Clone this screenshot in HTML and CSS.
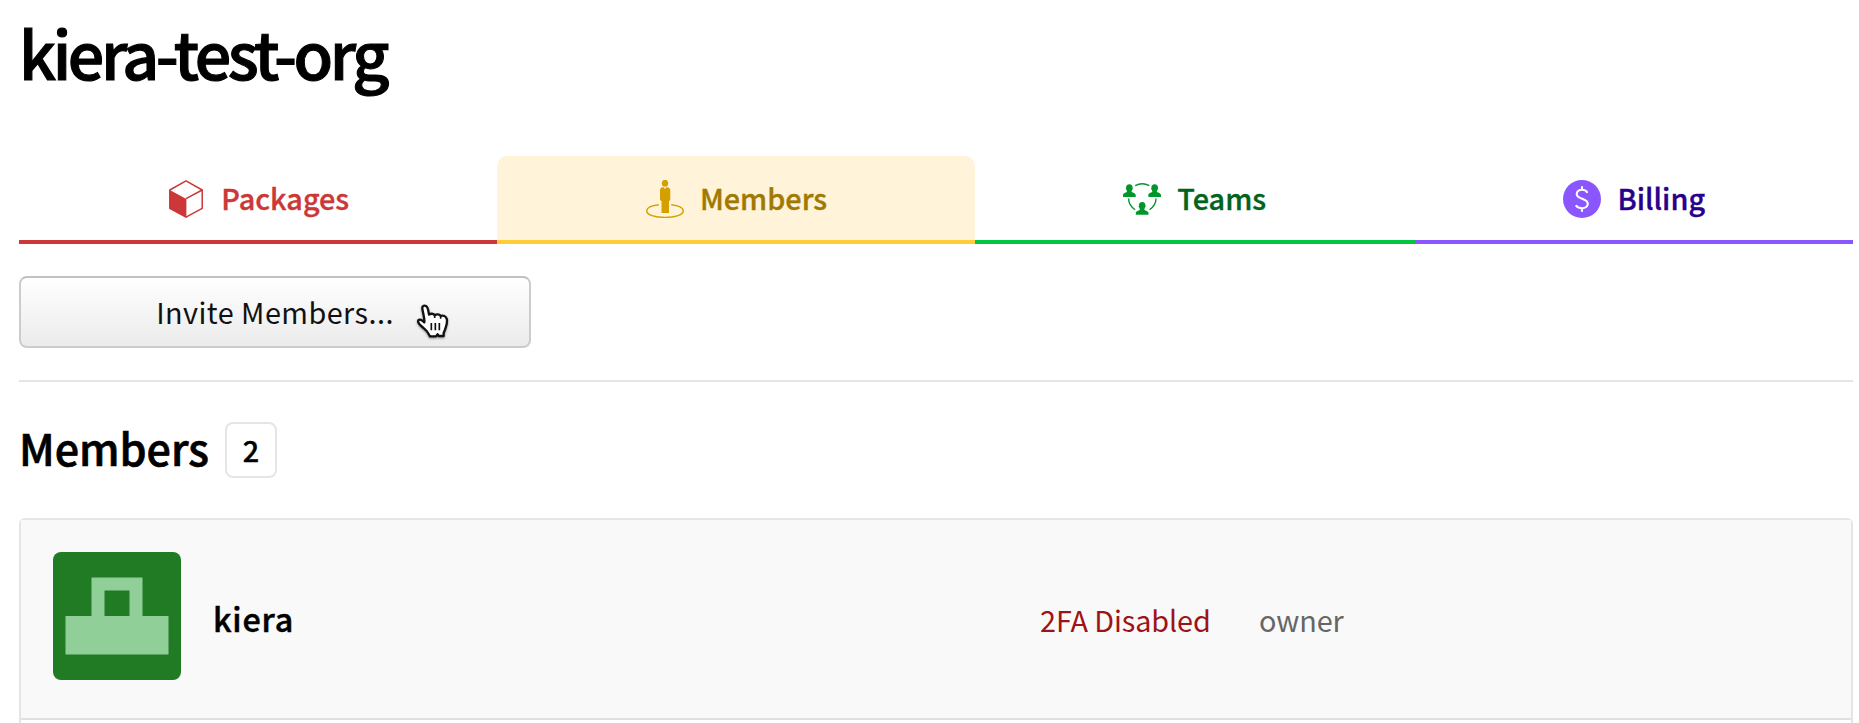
FILE: index.html
```html
<!DOCTYPE html>
<html lang="en">
<head>
<meta charset="utf-8">
<title>kiera-test-org</title>
<link rel="stylesheet" href="styles.css">
</head>
<body>
<main class="page">
  <h1 class="title">kiera-test-org</h1>
  <nav class="tabs">
    <a class="tab tab-packages">
      <svg class="icon" viewBox="0 0 38 38"><path d="M19 .8 35.200 10v18.400L19 37.200 2.800 28.400V10z" fill="none" stroke="#cb3837" stroke-width="1.500" stroke-linejoin="round"/><path d="M2.800 10 19.400 19v18.500L2.800 28.400z" fill="#cb3837"/><path d="M19 18.700 35.200 10" fill="none" stroke="#cb3837" stroke-width="1.500"/></svg>
      <span>Packages</span>
    </a>
    <a class="tab tab-members">
      <svg class="icon" viewBox="0 0 38 38" fill="#d49f00"><ellipse cx="19" cy="3.300" rx="3.200" ry="3.500"/><path d="M17 7.300h.600L19 9l1.400-1.700h.600c2.300.300 3.300 1.300 3.300 3.300V19c0 1.200-.500 1.900-1.300 2v12h-7.500V21c-.900-.100-1.500-.800-1.500-2v-8.400c0-2 .800-3 3-3.300z"/><path d="M12.800 24.800C5.500 25.600.7 28 .7 31c0 3.700 8 6.400 18.300 6.400S37.300 34.700 37.300 31c0-3-4.800-5.400-12.100-6.200" fill="none" stroke="#d49f00" stroke-width="1.400"/></svg>
      <span>Members</span>
    </a>
    <a class="tab tab-teams">
      <svg class="icon" viewBox="0 0 38 38" fill="#00962c"><defs><path id="bust" d="M6.400 0C8.600 0 9.700 1.400 9.600 3.600c.500.500.100 1.600-.400 2-.200.800-.700 1.200-.700 1.800 0 1 4.200 1.200 4.200 3.600v1.300c0 .400-.200.500-.500.500H.500c-.400 0-.500-.200-.500-.500V11c0-2.400 4.100-2.600 4.100-3.600 0-.600-.500-1-.700-1.800-.500-.400-.800-1.500-.300-2C3.100 1.400 4.200 0 6.400 0z"/></defs><use href="#bust" y="4.200"/><use href="#bust" x="25.300" y="4.200"/><use href="#bust" x="12.800" y="22"/><path d="M12.200 5.700q7-3.900 14.100 0M5.600 18.500q0 6.700 6.500 11.300M33 18.500q0 6.700-6.500 11.300" fill="none" stroke="#00962c" stroke-width="1.400"/></svg>
      <span>Teams</span>
    </a>
    <a class="tab tab-billing">
      <svg class="icon" viewBox="0 0 38 38"><circle cx="19" cy="19" r="19" fill="#8956ff"/><path d="M24.500 12.700C23.500 10.700 21.400 9.700 19 9.700c-3 0-5.300 1.600-5.300 4.200 0 6 11.100 3.500 11.100 9.900 0 2.600-2.500 4.400-5.800 4.400-2.700 0-5-.900-6.300-2.900M19 6.200v3.500M19 28.200v3.600" fill="none" stroke="#fff" stroke-width="2.100"/></svg>
      <span>Billing</span>
    </a>
  </nav>
  <div class="actions">
    <button class="invite">Invite Members...
      <svg class="pointer" viewBox="48 40 102 105"><path d="M67 54C66 46 72 43 78 46 84 49 85 58 87 72 92 68 101 68 104 74 110 70 119 70 122 76 129 73 138 76 140 84 144 96 138 106 135 117L131 127V136H116L113 131 108 137H90L86 130C80 118 74 115 67 109 60 103 52 94 55 89 59 84 66 88 73 95 75 86 69 68 67 54z" fill="#fff" stroke="#111" stroke-width="7" stroke-linejoin="round"/><path d="M104 74v8M122 76v8M94 97v22M106 97v22M118 97v22" stroke="#111" stroke-width="5"/></svg>
    </button>
  </div>
  <section class="members">
    <div class="heading"><h2>Members</h2><span class="count">2</span></div>
    <ul class="list">
      <li class="row">
        <svg class="avatar" viewBox="0 0 128 128"><rect width="128" height="128" rx="8" fill="#217a24"/><path d="M38.500 25.500h51V64H115.500v38.500H12.500V64h26zM51.500 38.500V64h25V38.500z" fill="#90cf98" fill-rule="evenodd"/></svg>
        <span class="name">kiera</span>
        <span class="tfa">2FA Disabled</span>
        <span class="role">owner</span>
      </li>
    </ul>
  </section>
</main>
</body>
</html>
```
FILE: styles.css
```css
* { box-sizing: border-box; }
html { overflow: hidden; }
body {
  margin: 0;
  background: #fff;
  color: #000;
  font-family: "Noto Sans CJK SC", "Noto Sans CJK JP", sans-serif;
  font-size: 28.8px;
  height: 723px;
  overflow: hidden;
}
.page { padding: 7px 6px 0 19px; }
.title {
  margin: 0;
  height: 149px;
  font-size: 64.5px;
  font-weight: 500;
  line-height: 90px;
  letter-spacing: -3.4px;
  -webkit-text-stroke: 1.1px;
}
.tabs {
  display: grid;
  grid-template-columns: 478px 478px 440.5px 1fr;
}
.tab {
  display: flex;
  align-items: center;
  justify-content: center;
  gap: 16px;
  height: 88px;
  padding-top: 2px;
  border-bottom: 4px solid;
  font-weight: 500;
  line-height: 40px;
  -webkit-text-stroke: .35px;
}
.tab span { margin-top: -2px; }
.icon { width: 38px; height: 38px; flex: none; }
.tab-packages { gap: 16.5px; color: #cb3837; border-color: #cb3837; }
.tab-members {
  padding-left: 1px;
  color: #a17900;
  border-color: #ffcd3a;
  background: #fff4da;
  border-radius: 10px 10px 0 0;
}
.tab-teams { padding-right: 1px; color: #00641d; border-color: #00c642; }
.tab-billing { color: #29008b; border-color: #8956ff; }
.actions {
  height: 138px;
  padding-top: 32px;
  border-bottom: 2px solid #e5e5e5;
}
.invite {
  position: relative;
  display: block;
  width: 512px;
  height: 72px;
  padding: 0;
  border: 2px solid #ccc;
  border-top-color: #c1c1c1;
  border-radius: 8px;
  background: linear-gradient(#fff, #ebebeb);
  color: #111;
  font: inherit;
  line-height: 68px;
  letter-spacing: .45px;
}
.pointer {
  position: absolute;
  left: 395px;
  top: 26px;
  width: 34px;
  height: 35px;
  overflow: visible;
  filter: drop-shadow(0 1px 1px rgba(0, 0, 0, .4));
}
.heading {
  display: flex;
  align-items: center;
  gap: 16px;
  height: 56px;
  margin: 40px 0;
}
.heading h2 {
  margin: 0;
  font-size: 43px;
  font-weight: 500;
  line-height: 56px;
  padding-bottom: 6px;
  -webkit-text-stroke: .7px;
}
.count {
  width: 52px;
  height: 56px;
  border: 2px solid #e5e5e5;
  border-radius: 8px;
  text-align: center;
  font-weight: 500;
  line-height: 52px;
  -webkit-text-stroke: .4px;
}
.list {
  margin: 0;
  padding: 0;
  height: 240px;
  list-style: none;
  border: 2px solid #e5e5e5;
  border-radius: 6px;
}
.row {
  display: grid;
  grid-template-columns: 128px 859px 219px 1fr;
  align-items: center;
  height: 200px;
  padding-left: 32px;
  border-bottom: 2px solid #e0e0e0;
  background: #f9f9f9;
  line-height: 48px;
}
.avatar { width: 128px; height: 128px; margin-bottom: 6px; }
.name {
  padding: 0 0 2px 32px;
  font-size: 32.3px;
  font-weight: 500;
  letter-spacing: .8px;
  -webkit-text-stroke: .5px;
}
.tfa { padding-top: 2px; color: #9e1316; letter-spacing: -.1px; }
.role { padding-top: 2px; color: #666; letter-spacing: -.1px; }
```
